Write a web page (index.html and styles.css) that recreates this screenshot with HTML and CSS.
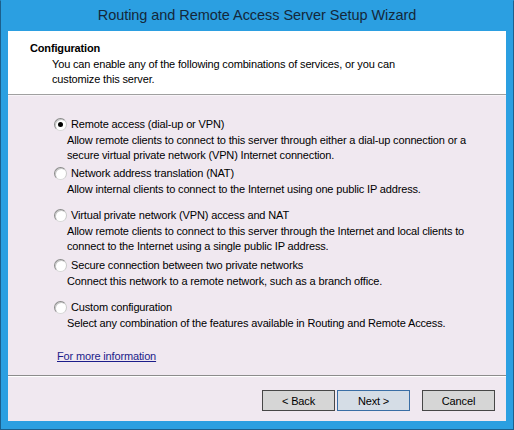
FILE: index.html
```html
<!DOCTYPE html>
<html>
<head>
<meta charset="utf-8">
<link rel="stylesheet" href="styles.css">
</head>
<body>
<div class="window">
  <div class="titlebar">Routing and Remote Access Server Setup Wizard</div>
  <div class="client">
    <div class="header">
      <div class="h-title">Configuration</div>
      <div class="h-sub">You can enable any of the following combinations of services, or you can<br>customize this server.</div>
    </div>
    <div class="body">
      <div class="option opt1">
        <div class="opt-row"><span class="radio checked"></span><span class="opt-label">Remote access (dial-up or VPN)</span></div>
        <div class="opt-desc">Allow remote clients to connect to this server through either a dial-up connection or a<br>secure virtual private network (VPN) Internet connection.</div>
      </div>
      <div class="option opt2">
        <div class="opt-row"><span class="radio"></span><span class="opt-label">Network address translation (NAT)</span></div>
        <div class="opt-desc">Allow internal clients to connect to the Internet using one public IP address.</div>
      </div>
      <div class="option opt3">
        <div class="opt-row"><span class="radio"></span><span class="opt-label">Virtual private network (VPN) access and NAT</span></div>
        <div class="opt-desc">Allow remote clients to connect to this server through the Internet and local clients to<br>connect to the Internet using a single public IP address.</div>
      </div>
      <div class="option opt4">
        <div class="opt-row"><span class="radio"></span><span class="opt-label">Secure connection between two private networks</span></div>
        <div class="opt-desc">Connect this network to a remote network, such as a branch office.</div>
      </div>
      <div class="option opt5">
        <div class="opt-row"><span class="radio"></span><span class="opt-label">Custom configuration</span></div>
        <div class="opt-desc">Select any combination of the features available in Routing and Remote Access.</div>
      </div>
      <a class="more" href="#">For more information </a>
    </div>
    <div class="footer">
      <button class="btn">&lt; Back</button>
      <button class="btn btn-default">Next &gt;</button>
      <button class="btn btn-cancel">Cancel</button>
    </div>
  </div>
</div>
</body>
</html>
```

FILE: styles.css
```css
html, body {
  margin: 0;
  padding: 0;
}
body {
  width: 514px;
  height: 430px;
  overflow: hidden;
  font-family: "Liberation Sans", Arial, sans-serif;
  font-size: 11px;
  letter-spacing: -0.15px;
  color: #000;
}
.window {
  box-sizing: border-box;
  width: 514px;
  height: 430px;
  background: #2b9fe1;
  border: 1px solid #1c5f8c;
  border-top-color: #2b9fe1;
  display: flex;
  flex-direction: column;
  padding: 0 7px 8px 7px;
}
.titlebar {
  height: 31px;
  line-height: 31px;
  margin-top: -1px;
  text-align: center;
  font-size: 14.5px;
  letter-spacing: -0.05px;
  color: #14283a;
}
.client {
  flex: 1;
  display: flex;
  flex-direction: column;
  background: #f0e8f0;
}
.header {
  height: 64px;
  box-sizing: border-box;
  background: #fff;
  padding: 10px 0 0 22px;
  border-bottom: 1px solid #a0a0a0;
  box-shadow: 0 1px 0 #f8f4f8;
  line-height: 15px;
}
.h-title {
  font-weight: bold;
}
.h-sub {
  margin-top: 1px;
  padding-left: 22px;
}
.body {
  flex: 1;
  padding: 22px 0 0 45px;
  line-height: 15px;
}
.option {
  margin-top: 3px;
}
.opt1 { margin-top: 0; }
.opt3, .opt5 { margin-top: 11px; }
.opt4 { margin-top: 4px; }
.opt-row {
  display: flex;
  align-items: center;
  height: 15px;
}
.radio {
  box-sizing: border-box;
  width: 13px;
  height: 13px;
  border-radius: 50%;
  border: 1px solid #8a8a8a;
  border-right-color: #c8c8c8;
  border-bottom-color: #d8d8d8;
  background: #fff;
  box-shadow: inset 1px 1px 0 #c8c8c8;
  display: flex;
  align-items: center;
  justify-content: center;
  margin-left: 1px;
  margin-right: 4px;
}
.radio.checked::after {
  content: "";
  width: 5px;
  height: 5px;
  border-radius: 50%;
  background: #000;
}
.opt-desc {
  margin-top: 1px;
  padding-left: 14px;
}
.more {
  display: inline-block;
  margin-top: 18px;
  margin-left: 4px;
  color: #1c1c8a;
  text-decoration: underline;
}
.footer {
  height: 46px;
  box-sizing: border-box;
  border-top: 1px solid #8c8c8c;
  box-shadow: inset 0 1px 0 #ffffff;
  display: flex;
  justify-content: flex-end;
  align-items: flex-start;
  padding: 14px 11px 0 0;
  gap: 2px;
}
.btn {
  width: 73px;
  height: 21px;
  box-sizing: border-box;
  border: 1px solid #474747;
  background: #d6d6d6;
  font-family: "Liberation Sans", Arial, sans-serif;
  font-size: 11px;
  letter-spacing: -0.15px;
  color: #000;
  padding: 0;
  margin: 0;
}
.btn-default {
  border-color: #3a6ea5;
  background: #d5dde6;
}
.btn-cancel {
  margin-left: 10px;
}
```
